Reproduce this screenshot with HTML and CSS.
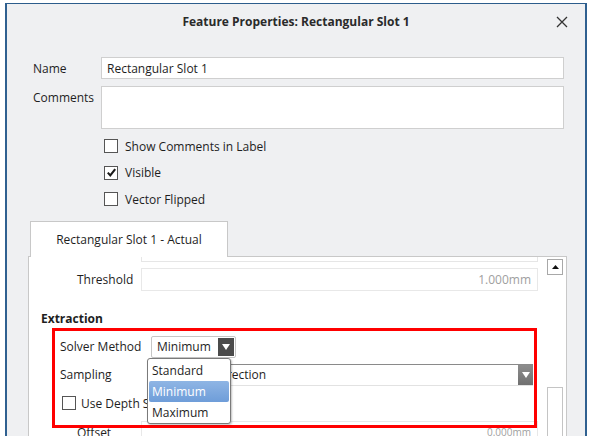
FILE: index.html
```html
<!DOCTYPE html>
<html>
<head>
<meta charset="utf-8">
<link rel="stylesheet" href="styles.css">
</head>
<body>
<div class="window">
  <div class="titlebar">
    <span class="title">Feature Properties: Rectangular Slot 1</span>
    <span class="close"><svg width="12" height="12" viewBox="0 0 12 12"><path d="M1 1L11 11M11 1L1 11" stroke="#333" stroke-width="1.3" fill="none"/></svg></span>
  </div>
  <div class="form">
    <div class="row">
      <span class="lbl">Name</span>
      <div class="input">Rectangular Slot 1</div>
    </div>
    <div class="row top">
      <span class="lbl pad">Comments</span>
      <div class="textarea"></div>
    </div>
    <div class="checks">
      <div class="check"><span class="box"></span><span>Show Comments in Label</span></div>
      <div class="check"><span class="box"><svg width="11" height="11" viewBox="0 0 11 11"><path d="M1.8 5.6L4.3 8.4L9.2 2.2" stroke="#1a1a1a" stroke-width="2.1" fill="none"/></svg></span><span>Visible</span></div>
      <div class="check"><span class="box"></span><span>Vector Flipped</span></div>
    </div>
  </div>
  <div class="tabs">
    <div class="tab">Rectangular Slot 1 - Actual</div>
  </div>
  <div class="pane">
    <div class="content">
      <div class="prev-input"></div>
      <div class="frow">
        <span class="flbl">Threshold</span>
        <div class="finput">1.000mm</div>
      </div>
      <div class="section">Extraction</div>
      <div class="grow">
        <span class="glbl">Solver Method</span>
        <div class="combo small"><span>Minimum</span><span class="cbtn dark"><svg width="8" height="6" viewBox="0 0 8 6"><path d="M0 0H8L4 6Z" fill="#fff"/></svg></span></div>
      </div>
      <div class="grow">
        <span class="glbl">Sampling</span>
        <div class="combo wide"><span class="ctext">Vector Direction</span><span class="cbtn gray"><svg width="8" height="6" viewBox="0 0 8 6"><path d="M0 0H8L4 6Z" fill="#fff"/></svg></span></div>
      </div>
      <div class="grow chk">
        <span class="box"></span><span>Use Depth Search</span>
      </div>
      <div class="frow offset">
        <span class="flbl">Offset</span>
        <div class="finput">0.000mm</div>
      </div>
      <div class="highlight"></div>
      <div class="dropdown">
        <div class="item">Standard</div>
        <div class="item sel">Minimum</div>
        <div class="item">Maximum</div>
      </div>
    </div>
    <div class="scrollbar">
      <div class="sbtn"><svg width="7" height="4" viewBox="0 0 7 4"><path d="M0 4H7L3.5 0Z" fill="#111"/></svg></div>
      <div class="strack"></div>
      <div class="sthumb"></div>
    </div>
  </div>
</div>
</body>
</html>
```

FILE: styles.css
```css
* { box-sizing: border-box; }
html, body {
  margin: 0;
  padding: 0;
  background: #ffffff;
}
body {
  font-family: "Open Sans", "Noto Sans", sans-serif;
  font-size: 12px;
  color: #1e1e1e;
  overflow: hidden;
  height: 436px;
}
.window {
  margin: 3px 0 0 5px;
  width: 582px;
  height: 433px;
  background: #eff0f2;
  border-top: 1px solid #2c5d8c;
  border-left: 2px solid #2f6090;
  border-right: 2px solid #2f6090;
  overflow: hidden;
  display: flex;
  flex-direction: column;
}
.titlebar {
  height: 34px;
  flex: none;
  display: flex;
  align-items: center;
  justify-content: center;
  position: relative;
}
.title {
  font-weight: 700;
  font-size: 12px;
  color: #2a2a2a;
}
.close {
  position: absolute;
  right: 17px;
  top: 12px;
  width: 12px;
  height: 12px;
  display: flex;
}
.form {
  padding: 19px 21px 0 26px;
  flex: none;
}
.row {
  display: flex;
  align-items: center;
}
.row.top {
  align-items: flex-start;
  margin-top: 7px;
}
.lbl {
  width: 68px;
  flex: none;
}
.lbl.pad { padding-top: 3px; }
.input {
  flex: 1;
  height: 22px;
  background: #fff;
  border: 1px solid #cfcfcf;
  padding: 0 5px;
  display: flex;
  align-items: center;
}
.textarea {
  flex: 1;
  height: 43px;
  background: #fff;
  border: 1px solid #cfcfcf;
}
.checks {
  margin: 4px 0 0 71px;
}
.check {
  height: 26.5px;
  display: flex;
  align-items: center;
  gap: 7px;
}
.box {
  width: 14px;
  height: 14px;
  border: 1px solid #555;
  background: #fff;
  display: flex;
  align-items: center;
  justify-content: center;
  flex: none;
}
.tabs {
  margin: 8px 0 0 23px;
  flex: none;
  display: flex;
  position: relative;
  z-index: 1;
}
.tab {
  width: 198px;
  height: 36px;
  background: #fff;
  border: 1px solid #c8c8c8;
  border-bottom: none;
  display: flex;
  align-items: center;
  justify-content: center;
  margin-bottom: -1px;
}
.pane {
  margin: 0 18px 0 21px;
  flex: 1;
  background: #fff;
  border: 1px solid #c8c8c8;
  display: flex;
  padding: 0 3px 0 0;
}
.content {
  flex: 1;
  position: relative;
}
.prev-input {
  margin-left: 112px;
  width: 397px;
  height: 5px;
  border: 1px solid #e6e6e6;
  border-top: none;
}
.frow {
  display: flex;
  align-items: center;
  margin-top: 6px;
}
.flbl {
  width: 112px;
  padding-left: 48px;
  flex: none;
}
.finput {
  width: 397px;
  height: 23px;
  border: 1px solid #e8e8e8;
  color: #a0a0a0;
  display: flex;
  align-items: center;
  justify-content: flex-end;
  padding-right: 6px;
}
.section {
  font-weight: 700;
  margin: 19px 0 0 12px;
  height: 18px;
  line-height: 18px;
}
.grow {
  display: flex;
  align-items: center;
  margin: 8px 0 0 31px;
  height: 22px;
}
.grow + .grow { margin-top: 6px; }
.glbl {
  width: 91px;
  flex: none;
}
.combo {
  height: 22px;
  display: flex;
  align-items: center;
  background: #fff;
}
.combo.small {
  width: 85px;
  border: 1px solid #c6c6c6;
  border-radius: 2px;
  padding-left: 5px;
  justify-content: space-between;
  padding-right: 1px;
}
.combo.wide {
  width: 382px;
  border-top: 1px solid #8a8a8a;
  border-bottom: 1px solid #e2e2e2;
  padding-left: 5px;
  justify-content: space-between;
}
.ctext { padding-left: 20px; }
.cbtn {
  display: flex;
  align-items: center;
  justify-content: center;
}
.cbtn.dark {
  width: 16px;
  height: 18px;
  background: #4b4b4b;
}
.cbtn.gray {
  width: 15px;
  height: 20px;
  background: linear-gradient(#8d8d8d, #707070);
}
.grow.chk {
  margin-top: 6px;
  margin-left: 33px;
  height: 23px;
  gap: 5px;
}
.offset {
  margin-top: 6px;
}
.offset .finput {
  font-size: 10px;
}
.highlight {
  position: absolute;
  left: 23px;
  top: 71px;
  width: 485px;
  height: 100px;
  border: 3px solid #f00;
}
.dropdown {
  position: absolute;
  left: 118px;
  top: 101px;
  width: 84px;
  height: 66px;
  background: #fff;
  border: 1px solid #7a7a7a;
  border-radius: 3px;
  box-shadow: 1px 1px 2px rgba(0,0,0,0.25);
  padding: 1px;
}
.item {
  height: 21px;
  line-height: 21px;
  padding-left: 3px;
}
.item.sel {
  background: linear-gradient(#8fb5e4, #6e9dd9);
  color: #fff;
  border-radius: 2px;
}
.scrollbar {
  width: 16px;
  flex: none;
  padding-top: 2px;
  display: flex;
  flex-direction: column;
}
.sbtn {
  width: 16px;
  height: 16px;
  border: 1px solid #a8a8a8;
  display: flex;
  align-items: center;
  justify-content: center;
  background: #fff;
}
.strack {
  height: 112px;
}
.sthumb {
  flex: 1;
  border: 1px solid #c4c4c4;
  border-bottom: none;
  width: 16px;
}
```
